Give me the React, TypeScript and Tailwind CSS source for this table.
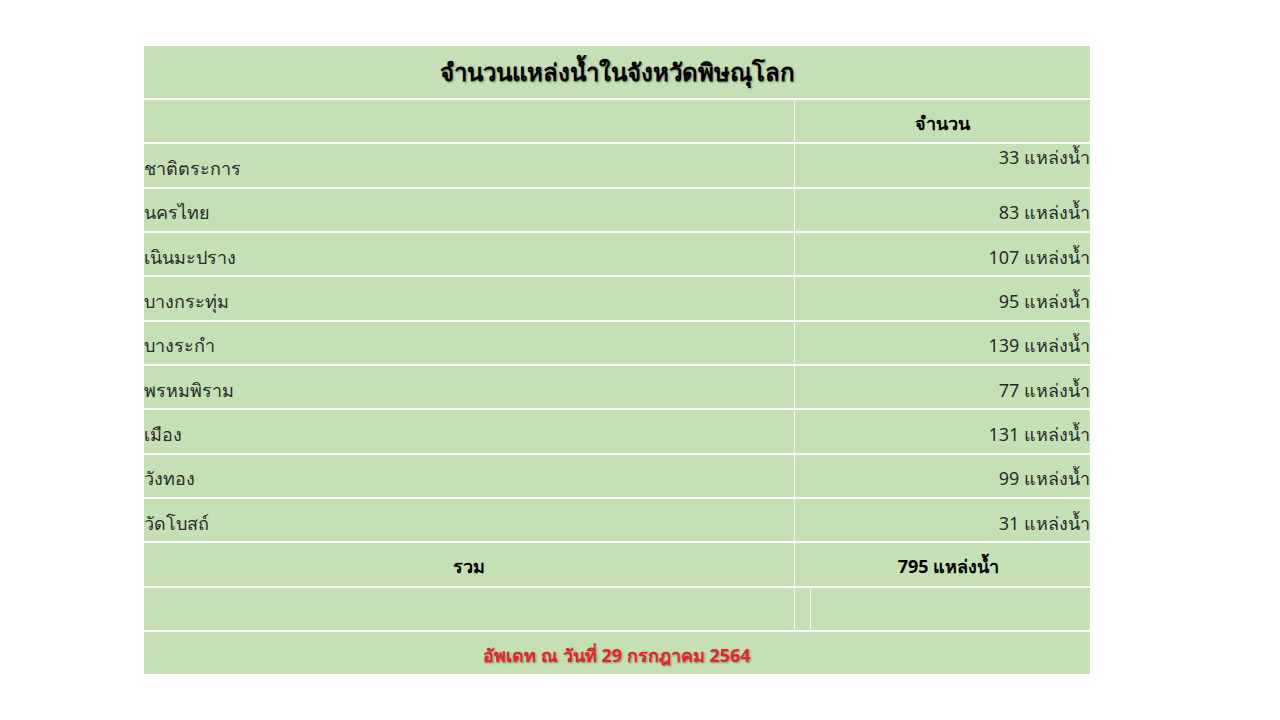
import React from "react";

const rows: [string, string][] = [
  ["ชาติตระการ", "33 แหล่งน้ำ"],
  ["นครไทย", "83 แหล่งน้ำ"],
  ["เนินมะปราง", "107 แหล่งน้ำ"],
  ["บางกระทุ่ม", "95 แหล่งน้ำ"],
  ["บางระกำ", "139 แหล่งน้ำ"],
  ["พรหมพิราม", "77 แหล่งน้ำ"],
  ["เมือง", "131 แหล่งน้ำ"],
  ["วังทอง", "99 แหล่งน้ำ"],
  ["วัดโบสถ์", "31 แหล่งน้ำ"],
];

const font = { fontFamily: "Tahoma, 'Noto Sans', 'DejaVu Sans', sans-serif" };

export default function App() {
  return (
    <div className="w-[1280px] h-[720px] bg-white pt-[46px] pl-[144px]" style={font}>
      <div className="w-[946px] bg-[#c5e0b4] text-[#2a2a2a] text-[18px]">
        {/* title */}
        <div className="h-[52px] flex items-center justify-center text-[24px] font-bold text-black [text-shadow:1px_1px_2px_rgba(0,0,0,0.35)]">
          จำนวนแหล่งน้ำในจังหวัดพิษณุโลก
        </div>

        {/* header */}
        <div className="h-[44.33px] flex border-t-2 border-white">
          <div className="w-[651px] border-r border-white" />
          <div className="flex-1 flex items-center justify-center font-bold text-black pt-1">จำนวน</div>
        </div>

        {rows.map(([name, count], i) => (
          <div key={name} className="h-[44.33px] flex border-t-2 border-white">
            <div className="w-[651px] border-r border-white flex items-center pt-[6px]">{name}</div>
            <div
              className={
                "flex-1 flex justify-end " + (i === 0 ? "items-start" : "items-center pt-[6px]")
              }
            >
              {count}
            </div>
          </div>
        ))}

        {/* total */}
        <div className="h-[44.33px] flex border-t-2 border-white font-bold text-black">
          <div className="w-[651px] border-r border-white flex items-center justify-center pt-1">รวม</div>
          <div className="flex-1 flex items-center justify-center pl-3 pt-1">795 แหล่งน้ำ</div>
        </div>

        {/* empty */}
        <div className="h-[44.33px] flex border-t-2 border-white">
          <div className="w-[651px] border-r border-white" />
          <div className="w-[16px] border-r border-white" />
          <div className="flex-1" />
        </div>

        {/* update */}
        <div className="h-[44.33px] flex items-center justify-center border-t-2 border-white text-[18px] font-bold text-[#e3262a] pt-1 [text-shadow:1px_1px_2px_rgba(0,0,0,0.35)]">
          อัพเดท ณ วันที่ 29 กรกฎาคม 2564
        </div>
      </div>
    </div>
  );
}
